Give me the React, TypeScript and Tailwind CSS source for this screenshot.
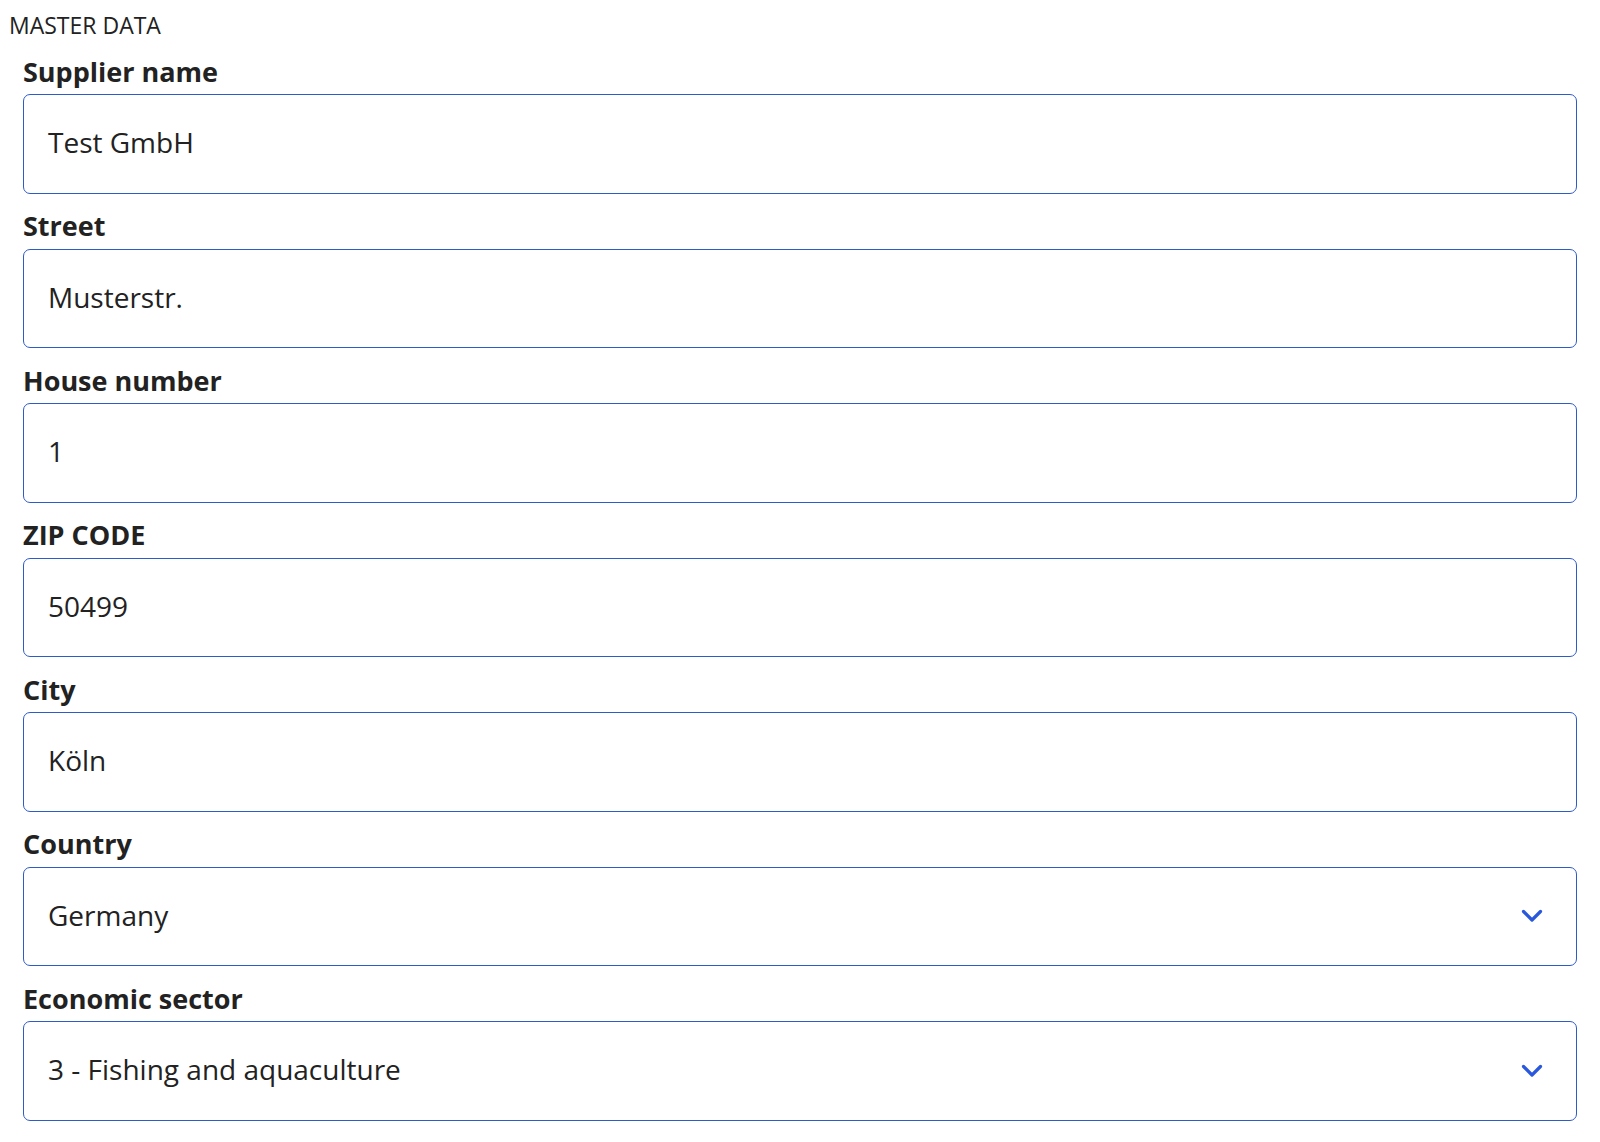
type Field = {
  label: string;
  value: string;
  select?: boolean;
};

const FIELDS: Field[] = [
  { label: 'Supplier name', value: 'Test GmbH' },
  { label: 'Street', value: 'Musterstr.' },
  { label: 'House number', value: '1' },
  { label: 'ZIP CODE', value: '50499' },
  { label: 'City', value: 'Köln' },
  { label: 'Country', value: 'Germany', select: true },
  { label: 'Economic sector', value: '3 - Fishing and aquaculture', select: true },
];

function Chevron() {
  return (
    <svg width="22" height="14" viewBox="0 0 22 14" fill="none" className="text-[#2a58dc]">
      <path d="M2.5 2.5 L11 11 L19.5 2.5" stroke="currentColor" strokeWidth="3.2" strokeLinecap="round" strokeLinejoin="round" />
    </svg>
  );
}

export default function App() {
  return (
    <div className="min-h-screen bg-white pt-[11px] font-['Open_Sans',sans-serif] text-[#222]">
      <p className="pl-[9px] text-[23px] leading-[28px]">MASTER DATA</p>

      <div className="px-[23px]">
        {FIELDS.map((f) => (
          <div key={f.label}>
            <label className="mb-[6.5px] mt-[16.5px] block text-[27px] font-bold leading-[32px]">{f.label}</label>
            <div className="flex h-[99.5px] items-center justify-between rounded-[7px] border-[1.5px] border-[#2f5bc8] pb-[3px] pl-[24px] pr-[33px]">
              <span className="text-[28px]">{f.value}</span>
              {f.select && (
                <span className="pt-[3px]">
                  <Chevron />
                </span>
              )}
            </div>
          </div>
        ))}
      </div>
    </div>
  );
}
